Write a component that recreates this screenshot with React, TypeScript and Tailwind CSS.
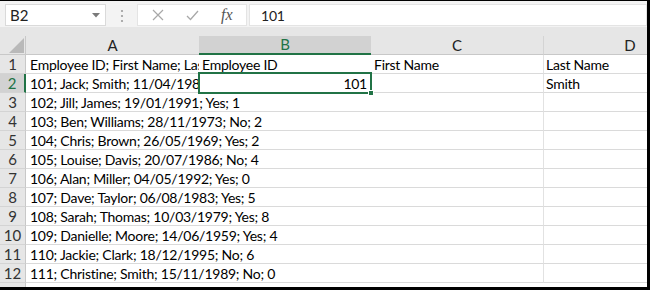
import React from "react";

const font = { fontFamily: "Lato, 'Open Sans', sans-serif" };

const rows: string[] = [
  "Employee ID; First Name; Last Name; Date of Birth; Member; Visits",
  "101; Jack; Smith; 11/04/1986; Yes; 3",
  "102; Jill; James; 19/01/1991; Yes; 1",
  "103; Ben; Williams; 28/11/1973; No; 2",
  "104; Chris; Brown; 26/05/1969; Yes; 2",
  "105; Louise; Davis; 20/07/1986; No; 4",
  "106; Alan; Miller; 04/05/1992; Yes; 0",
  "107; Dave; Taylor; 06/08/1983; Yes; 5",
  "108; Sarah; Thomas; 10/03/1979; Yes; 8",
  "109; Danielle; Moore; 14/06/1959; Yes; 4",
  "110; Jackie; Clark; 18/12/1995; No; 6",
  "111; Christine; Smith; 15/11/1989; No; 0",
];

function FormulaBar() {
  return (
    <div className="flex h-[26px] items-start bg-[#f3f3f3] pt-[3px]">
      <div className="ml-[5px] flex h-[22px] w-[101px] items-center justify-between border border-[#dadada] bg-white pl-[4px] pr-[5px]">
        <span className="text-[15px] text-[#222]">B2</span>
        <svg width="8" height="5" viewBox="0 0 8 5">
          <path d="M0 0H8L4 4.5Z" fill="#7a7a7a" />
        </svg>
      </div>
      <div className="flex w-[31px] justify-center pt-[5px]">
        <svg width="4" height="14" viewBox="0 0 4 14">
          <circle cx="2" cy="2" r="1.1" fill="#9c9c9c" />
          <circle cx="2" cy="7" r="1.1" fill="#9c9c9c" />
          <circle cx="2" cy="12" r="1.1" fill="#9c9c9c" />
        </svg>
      </div>
      <div className="flex h-[22px] w-[110px] items-center border border-[#e4e4e4] bg-white">
        <svg className="ml-[14px]" width="12" height="12" viewBox="0 0 12 12">
          <path d="M1 1L11 11M11 1L1 11" stroke="#a8a8a8" strokeWidth="1.2" fill="none" />
        </svg>
        <svg className="ml-[22px]" width="13" height="11" viewBox="0 0 13 11">
          <path d="M1 6L4.5 9.5L12 1" stroke="#a8a8a8" strokeWidth="1.3" fill="none" />
        </svg>
        <span
          className="ml-[22px] text-[16px] italic text-[#555]"
          style={{ fontFamily: "'Liberation Serif', serif" }}
        >
          fx
        </span>
      </div>
      <div className="ml-[2px] flex h-[22px] flex-1 items-center border border-[#e4e4e4] bg-white pl-[11px]">
        <span className="text-[14px] tracking-[-0.2px] text-[#222]">101</span>
      </div>
    </div>
  );
}

function ColumnHeaders() {
  const head = "flex h-[19px] items-center justify-center text-[15px] text-[#222]";
  return (
    <div className="bg-[#e6e6e6] pt-[9px]">
      <div className="flex">
        <div className="relative h-[19px] w-[26px] shrink-0 border-r border-b border-[#c8c8c8]">
          <svg className="absolute left-[9px] top-[2px]" width="15" height="15" viewBox="0 0 15 15">
            <path d="M15 0V15H0Z" fill="#b9b9b9" />
          </svg>
        </div>
        <div className={`${head} w-[173px] shrink-0 border-b border-[#c8c8c8]`}>A</div>
        <div className={`${head} w-[172px] shrink-0 border-b-2 border-[#217346] bg-[#d2d2d2] text-[#217346]`}>B</div>
        <div className={`${head} w-[173px] shrink-0 border-r border-b border-[#d4d4d4] border-b-[#c8c8c8]`}>C</div>
        <div className={`${head} w-[172px] shrink-0 border-b border-[#c8c8c8]`}>D</div>
      </div>
    </div>
  );
}

function Row({ n, text }: { n: number; text: string }) {
  const selected = n === 2;
  const clipped = n <= 2;
  const cellText = "text-[14px] tracking-[-0.25px] text-black";
  return (
    <div className="flex h-[19px]">
      <div
        className={`flex w-[26px] shrink-0 items-center justify-center border-b border-[#d4d4d4] text-[15px] ${
          selected
            ? "border-r-2 border-r-[#217346] bg-[#d2d2d2] text-[#217346]"
            : "border-r border-r-[#c8c8c8] bg-[#e6e6e6] text-[#333]"
        }`}
      >
        {n}
      </div>
      <div
        className={`relative z-10 flex w-[173px] shrink-0 items-center border-b border-[#dadada] bg-white pl-[4px] ${cellText}`}
      >
        <span className={`whitespace-nowrap ${clipped ? "block w-full overflow-hidden" : ""}`}>{text}</span>
      </div>
      <div className={`relative flex w-[172px] shrink-0 items-center border-b border-[#dadada] bg-white pl-[3px] ${cellText}`}>
        {n === 1 && <span>Employee ID</span>}
        {selected && (
          <div className="absolute -left-[1px] -top-[2px] z-20 flex h-[22px] w-[174px] items-center justify-end border-2 border-[#217346] pr-[3px]">
            <span>101</span>
            <div className="absolute -bottom-[4px] -right-[4px] h-[6px] w-[6px] border border-white bg-[#217346]" />
          </div>
        )}
      </div>
      <div className={`flex w-[173px] shrink-0 items-center border-r border-b border-[#e2e2e2] border-b-[#dadada] bg-white pl-[3px] ${cellText}`}>
        {n === 1 && <span>First Name</span>}
      </div>
      <div className={`flex w-[172px] shrink-0 items-center border-b border-[#dadada] bg-white pl-[2px] ${cellText}`}>
        {n === 1 && <span>Last Name</span>}
        {n === 2 && <span>Smith</span>}
      </div>
    </div>
  );
}

export default function App() {
  return (
    <div
      className="h-[290px] w-[650px] overflow-hidden border-t border-r-[3px] border-b-[3px] border-black bg-white"
      style={font}
    >
      <div className="h-[286px] overflow-hidden">
        <FormulaBar />
        <ColumnHeaders />
        {rows.map((t, i) => (
          <Row key={i} n={i + 1} text={t} />
        ))}
        <div className="flex h-[19px]">
          <div className="w-[26px] shrink-0 border-r border-[#c8c8c8] bg-[#e6e6e6]" />
          <div className="flex-1 bg-white" />
        </div>
      </div>
    </div>
  );
}
